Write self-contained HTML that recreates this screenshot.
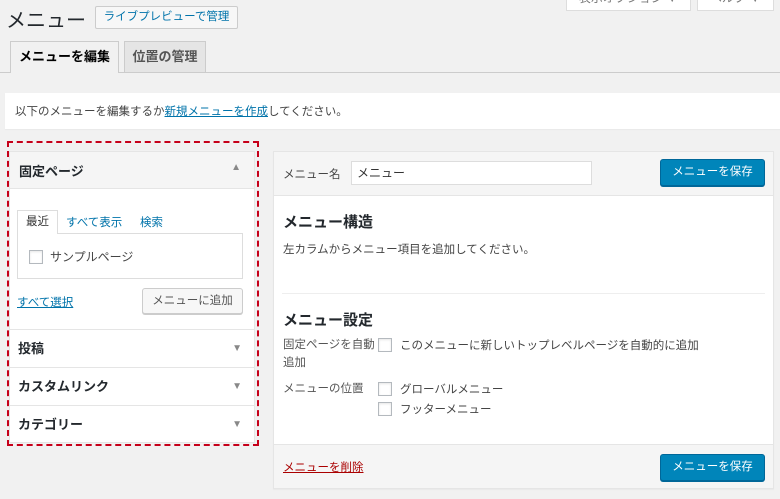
<!DOCTYPE html>
<html><head><meta charset="utf-8"><style>
*{box-sizing:border-box;margin:0;padding:0}
body{width:780px;height:499px;overflow:hidden;background:#f1f1f1;font-family:"Liberation Sans","Noto Sans CJK JP",sans-serif;font-size:11.5px;color:#444;position:relative}
.a{position:absolute}
.cb{position:absolute;width:14px;height:14px;border:1px solid #b4b9be;background:#fff;box-shadow:inset 0 1px 2px rgba(0,0,0,.1)}
.btnp{position:absolute;background:#0085ba;border:1px solid #006799;border-radius:3px;color:#fff;font-size:11.5px;text-align:center;box-shadow:0 1px 0 #006799}
.row{position:absolute;left:9px;width:246px;border-top:1px solid #e5e5e5;font-weight:bold;color:#23282d;font-size:13px;padding-left:9px}
.arr{position:absolute;right:13px;font-size:10px;color:#888;font-weight:normal}
</style></head><body>
<div class="a" style="left:566px;top:-2px;width:125px;height:13px;background:#fff;border:1px solid #ddd;border-top:none;overflow:hidden;color:#777;font-size:12px;line-height:0;text-align:center">表示オプション ▼</div>
<div class="a" style="left:697px;top:-2px;width:77px;height:13px;background:#fff;border:1px solid #ddd;border-top:none;overflow:hidden;color:#777;font-size:12px;line-height:0;text-align:center">ヘルプ ▼</div>
<div class="a" style="left:6px;top:4px;font-size:20px;color:#23282d">メニュー</div>
<div class="a" style="left:95px;top:6px;width:143px;height:23px;border:1px solid #ccc;background:#f7f7f7;color:#0073aa;font-size:11.5px;text-align:center;line-height:21px;border-radius:2px">ライブプレビューで管理</div>
<div class="a" style="left:0;top:72px;width:780px;border-top:1px solid #ccc"></div>
<div class="a" style="left:10px;top:41px;width:109px;height:32px;border:1px solid #ccc;border-bottom:none;background:#f1f1f1;font-weight:bold;color:#000;font-size:13px;text-align:center;line-height:30px">メニューを編集</div>
<div class="a" style="left:124px;top:41px;width:82px;height:31px;border:1px solid #ccc;border-bottom:none;background:#e5e5e5;font-weight:bold;color:#555;font-size:13px;text-align:center;line-height:30px">位置の管理</div>
<div class="a" style="left:5px;top:93px;width:780px;height:36px;background:#fff;box-shadow:0 1px 1px rgba(0,0,0,.04);padding:10px 10px">以下のメニューを編集するか<span style="color:#0073aa;text-decoration:underline">新規メニューを作成</span>してください。</div>

<div class="a" style="left:7px;top:141px;width:252px;height:305px;border:2px dashed #c6001a"></div>
<div class="a" style="left:9px;top:151px;width:246px;height:292px;background:#fff;border:1px solid #e5e5e5"></div>
<div class="a" style="left:9px;top:151px;width:246px;height:38px;background:#f5f5f5;border:1px solid #e5e5e5;font-weight:bold;color:#23282d;font-size:13px;padding:9px 9px">固定ページ<span class="arr" style="top:10px">▲</span></div>
<div class="a" style="left:17px;top:210px;width:41px;height:24px;border:1px solid #ddd;border-bottom:none;background:#fff;z-index:2;text-align:center;line-height:22px;color:#333">最近</div>
<div class="a" style="left:66px;top:214px;color:#0073aa">すべて表示</div>
<div class="a" style="left:140px;top:214px;color:#0073aa">検索</div>
<div class="a" style="left:17px;top:233px;width:226px;height:46px;border:1px solid #ddd;background:#fff"></div>
<div class="cb" style="left:29px;top:250px"></div>
<div class="a" style="left:50px;top:248px;font-size:12px">サンプルページ</div>
<div class="a" style="left:17px;top:294px;color:#0073aa;text-decoration:underline">すべて選択</div>
<div class="a" style="left:142px;top:288px;width:101px;height:26px;border:1px solid #ccc;background:#f7f7f7;border-radius:3px;text-align:center;line-height:24px;color:#555;box-shadow:0 1px 0 #ccc">メニューに追加</div>
<div class="row" style="top:329px;height:38px;line-height:38px">投稿<span class="arr">▼</span></div>
<div class="row" style="top:367px;height:38px;line-height:38px">カスタムリンク<span class="arr">▼</span></div>
<div class="row" style="top:405px;height:38px;line-height:38px">カテゴリー<span class="arr">▼</span></div>

<div class="a" style="left:273px;top:151px;width:501px;height:338px;background:#fff;border:1px solid #e5e5e5;box-shadow:0 1px 1px rgba(0,0,0,.04)"></div>
<div class="a" style="left:273px;top:151px;width:501px;height:45px;background:#f5f5f5;border:1px solid #e5e5e5"></div>
<div class="a" style="left:283px;top:166px">メニュー名</div>
<div class="a" style="left:351px;top:161px;width:241px;height:24px;border:1px solid #ddd;background:#fff;padding:2px 5px;font-size:12px;color:#333">メニュー</div>
<div class="btnp" style="left:660px;top:159px;width:105px;height:27px;line-height:25px">メニューを保存</div>
<div class="a" style="left:283px;top:211px;font-size:15px;font-weight:bold;color:#23282d">メニュー構造</div>
<div class="a" style="left:283px;top:241px">左カラムからメニュー項目を追加してください。</div>
<div class="a" style="left:282px;top:293px;width:483px;border-top:1px solid #eee"></div>
<div class="a" style="left:283px;top:309px;font-size:15px;font-weight:bold;color:#23282d">メニュー設定</div>
<div class="a" style="left:283px;top:336px;line-height:18px;color:#555">固定ページを自動<br>追加</div>
<div class="cb" style="left:378px;top:338px"></div>
<div class="a" style="left:400px;top:337px;color:#444">このメニューに新しいトップレベルページを自動的に追加</div>
<div class="a" style="left:283px;top:380px;color:#555">メニューの位置</div>
<div class="cb" style="left:378px;top:382px"></div>
<div class="a" style="left:400px;top:381px">グローバルメニュー</div>
<div class="cb" style="left:378px;top:402px"></div>
<div class="a" style="left:400px;top:401px">フッターメニュー</div>
<div class="a" style="left:273px;top:444px;width:501px;height:45px;background:#f5f5f5;border:1px solid #e5e5e5"></div>
<div class="a" style="left:283px;top:459px;color:#a00;text-decoration:underline">メニューを削除</div>
<div class="btnp" style="left:660px;top:454px;width:105px;height:27px;line-height:25px">メニューを保存</div>
</body></html>
